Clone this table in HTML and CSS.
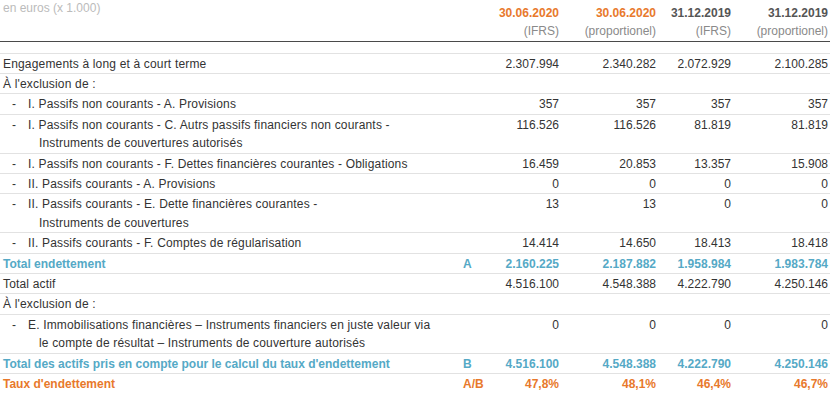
FILE: index.html
```html
<!DOCTYPE html>
<html lang="fr">
<head>
    <meta charset="UTF-8">
    <meta name="viewport" content="width=device-width, initial-scale=1.0">
    <title>Taux d'endettement</title>
    <link rel="stylesheet" href="styles.css">
</head>
<body>
    <table class="ratio">
        <colgroup>
            <col class="c-label"><col class="c-ref"><col class="c-n"><col class="c-w"><col class="c-n"><col class="c-w">
        </colgroup>
        <thead>
            <tr class="head">
                <th class="label">en euros (x 1.000)</th>
                <th></th>
                <th class="cur">30.06.2020<br><span>(IFRS)</span></th>
                <th class="cur">30.06.2020<br><span>(proportionel)</span></th>
                <th class="prev">31.12.2019<br><span>(IFRS)</span></th>
                <th class="prev">31.12.2019<br><span>(proportionel)</span></th>
            </tr>
            <tr class="spacer"><td colspan="6"></td></tr>
        </thead>
        <tbody>
            <tr>
                <td class="label">Engagements à long et à court terme</td><td></td>
                <td>2.307.994</td><td>2.340.282</td><td>2.072.929</td><td>2.100.285</td>
            </tr>
            <tr>
                <td class="label">À l'exclusion de :</td><td></td>
                <td></td><td></td><td></td><td></td>
            </tr>
            <tr>
                <td class="label"><div class="sub"><span class="dash">-</span><span class="txt">I. Passifs non courants - A. Provisions</span></div></td><td></td>
                <td>357</td><td>357</td><td>357</td><td>357</td>
            </tr>
            <tr>
                <td class="label"><div class="sub"><span class="dash">-</span><span class="txt">I. Passifs non courants - C. Autrs passifs financiers non courants -<br>Instruments de couvertures autorisés</span></div></td><td></td>
                <td>116.526</td><td>116.526</td><td>81.819</td><td>81.819</td>
            </tr>
            <tr>
                <td class="label"><div class="sub"><span class="dash">-</span><span class="txt">I. Passifs non courants - F. Dettes financières courantes - Obligations</span></div></td><td></td>
                <td>16.459</td><td>20.853</td><td>13.357</td><td>15.908</td>
            </tr>
            <tr>
                <td class="label"><div class="sub"><span class="dash">-</span><span class="txt">II. Passifs courants - A. Provisions</span></div></td><td></td>
                <td>0</td><td>0</td><td>0</td><td>0</td>
            </tr>
            <tr>
                <td class="label"><div class="sub"><span class="dash">-</span><span class="txt">II. Passifs courants - E. Dette financières courantes -<br>Instruments de couvertures</span></div></td><td></td>
                <td>13</td><td>13</td><td>0</td><td>0</td>
            </tr>
            <tr>
                <td class="label"><div class="sub"><span class="dash">-</span><span class="txt">II. Passifs courants - F. Comptes de régularisation</span></div></td><td></td>
                <td>14.414</td><td>14.650</td><td>18.413</td><td>18.418</td>
            </tr>
            <tr class="total">
                <td class="label">Total endettement</td><td class="ref">A</td>
                <td>2.160.225</td><td>2.187.882</td><td>1.958.984</td><td>1.983.784</td>
            </tr>
            <tr>
                <td class="label">Total actif</td><td></td>
                <td>4.516.100</td><td>4.548.388</td><td>4.222.790</td><td>4.250.146</td>
            </tr>
            <tr>
                <td class="label">À l'exclusion de :</td><td></td>
                <td></td><td></td><td></td><td></td>
            </tr>
            <tr>
                <td class="label"><div class="sub"><span class="dash">-</span><span class="txt">E. Immobilisations financières – Instruments financiers en juste valeur via<br>le compte de résultat – Instruments de couverture autorisés</span></div></td><td></td>
                <td>0</td><td>0</td><td>0</td><td>0</td>
            </tr>
            <tr class="total">
                <td class="label">Total des actifs pris en compte pour le calcul du taux d'endettement</td><td class="ref">B</td>
                <td>4.516.100</td><td>4.548.388</td><td>4.222.790</td><td>4.250.146</td>
            </tr>
            <tr class="rate">
                <td class="label">Taux d'endettement</td><td class="ref">A/B</td>
                <td>47,8%</td><td>48,1%</td><td>46,4%</td><td>46,7%</td>
            </tr>
        </tbody>
    </table>
</body>
</html>
```

FILE: styles.css
```css
* { margin: 0; padding: 0; box-sizing: border-box; }
body { background: #fff; color: #333; font-family: 'Liberation Sans', Arial, sans-serif; font-size: 12px; }

.ratio { width: 830px; border-collapse: collapse; table-layout: fixed; }
.c-label { width: 460px; }
.c-ref { width: 27px; }
.c-n { width: 75px; }
.c-w { width: 97px; }

.ratio th, .ratio td { padding: 0 3px; text-align: right; vertical-align: top; white-space: nowrap; }

.ratio .head th { padding-top: 4px; line-height: 18px; height: 41px; border-bottom: 1px solid #4a4a4a; font-weight: bold; }
.head th span { font-weight: normal; color: #8a8a8a; }
.ratio .head th.label { padding-top: 0; line-height: 16px; font-weight: normal; color: #bbb; text-align: left; }
.head th.cur { color: #e8792c; }
.head th.prev { color: #555; }

.spacer td { height: 12px; border-bottom: 1px solid #e2e2e2; }

.ratio tbody td { padding-top: 1px; line-height: 18.4px; border-bottom: 1px solid #e2e2e2; }
.ratio tbody td.label { text-align: left; letter-spacing: 0.17px; }
.ratio tbody td.ref { text-align: left; }

.sub { display: flex; padding-left: 9px; }
.sub .dash { width: 16px; flex: none; }
.sub .txt { padding-left: 11px; text-indent: -11px; }

.total td { color: #55a9c6; font-weight: bold; }
.ratio .total td.label, .ratio .rate td.label { letter-spacing: 0; }
.rate td { color: #e8792c; font-weight: bold; }
```
